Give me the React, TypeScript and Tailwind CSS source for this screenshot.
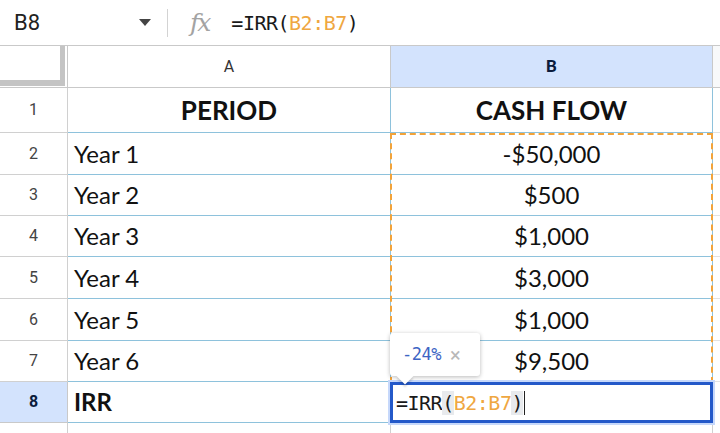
import React from 'react'

type Row = { n: number; a: string; b: string; h: string }

const rows: Row[] = [
  { n: 1, a: 'PERIOD', b: 'CASH FLOW', h: 'h-[45px]' },
  { n: 2, a: 'Year 1', b: '-$50,000', h: 'h-[42px]' },
  { n: 3, a: 'Year 2', b: '$500', h: 'h-[41px]' },
  { n: 4, a: 'Year 3', b: '$1,000', h: 'h-[41px]' },
  { n: 5, a: 'Year 4', b: '$3,000', h: 'h-[42px]' },
  { n: 6, a: 'Year 5', b: '$1,000', h: 'h-[42px]' },
  { n: 7, a: 'Year 6', b: '$9,500', h: 'h-[41px]' },
]

const mono = "font-['DejaVu_Sans_Mono','Liberation_Mono',monospace]"
const roboto = "font-['Roboto','Liberation_Sans',sans-serif]"

const Formula: React.FC<{ className?: string; parens?: boolean }> = ({ className, parens }) => (
  <span className={`${mono} ${className ?? ''} tracking-[-0.5px]`}>
    =IRR<span className={parens ? 'bg-[#e8eaed]' : ''}>(</span>
    <span className="text-[#efa741]">B2:B7</span>
    <span className={parens ? 'bg-[#e8eaed]' : ''}>)</span>
  </span>
)

export default function App() {
  return (
    <div className="w-[720px] h-[433px] bg-white overflow-hidden font-['Lato',sans-serif] text-[#111]">
      {/* name box + formula bar */}
      <div className="h-[46px] flex items-center border-b border-[#c9c9c9]">
        <div className={`ml-[14px] w-[120px] ${roboto} text-[22px] leading-none text-[#222]`}>B8</div>
        <svg width="12" height="7" viewBox="0 0 12 7" className="ml-[5px]">
          <path d="M0 0h12L6 7z" fill="#444" />
        </svg>
        <div className="ml-[16px] w-px h-[28px] bg-[#d3d3d3]" />
        <span className="ml-[22px] font-['DejaVu_Serif',serif] italic text-[25px] text-[#a3a3a3] tracking-[-2px]">fx</span>
        <Formula className="ml-[22px] text-[20px] text-[#1a1a1a]" />
      </div>

      <div className="relative">
        {/* column headers */}
        <div className={`grid grid-cols-[68px_323px_322px_7px] h-[42px] border-b border-[#c9c9c9] ${roboto}`}>
          <div className="border-r border-[#c9c9c9] flex">
            <div className="flex-1 mr-[2px] mb-[1px] border-r-[5px] border-b-[6px] border-[#c4c4c4]" />
          </div>
          <div className="border-r border-[#c9c9c9] flex items-center justify-center text-[16px] text-[#333]">A</div>
          <div className="border-r border-[#c9c9c9] bg-[#d3e3fd] flex items-center justify-center text-[17px] font-bold text-[#0b1c3c]">B</div>
          <div className="bg-[#f8f9fa]" />
        </div>

        {rows.map((r) => (
          <div key={r.n} className={`grid grid-cols-[68px_323px_322px_7px] ${r.h}`}>
            <div className={`border-r border-b border-[#d0d0d0] flex items-center justify-center ${roboto} text-[16px] text-[#444]`}>
              {r.n}
            </div>
            {r.n === 1 ? (
              <>
                <div className="border-r border-b border-[#8ec2dc] flex items-center justify-center text-[26px] font-bold">{r.a}</div>
                <div className="border-r border-b border-[#8ec2dc] flex items-center justify-center text-[26px] font-bold">{r.b}</div>
              </>
            ) : (
              <>
                <div className="border-r border-b border-[#8ec2dc] flex items-center pl-[6px] text-[24px]">{r.a}</div>
                <div className="border-r border-b border-[#8ec2dc] flex items-center justify-center text-[24px]">{r.b}</div>
              </>
            )}
            <div className="border-b border-[#e2e2e2]" />
          </div>
        ))}

        {/* active row */}
        <div className="grid grid-cols-[68px_323px_322px_7px] h-[41px]">
          <div className={`border-r border-b border-[#c9c9c9] bg-[#d3e3fd] flex items-center justify-center ${roboto} text-[16px] font-bold text-[#0b1c3c]`}>
            8
          </div>
          <div className="border-r border-b border-[#8ec2dc] flex items-center pl-[6px] text-[24px] font-bold">IRR</div>
          <div className="relative -ml-[1px] border-[3px] border-[#2459c9] shadow-[0_0_0_2px_#c6d8fb] flex items-center pl-[3px] z-10">
            <Formula className="text-[20px] text-[#1a1a1a]" parens />
            <span className="ml-[1px] w-px h-[24px] bg-[#222]" />
            {/* result preview */}
            <div className="absolute left-[-3px] bottom-[44px] w-[90px] h-[43px] bg-white rounded-[3px] shadow-[0_1px_4px_rgba(0,0,0,0.28)] flex items-center pl-[12px] gap-[9px]">
              <span className={`${mono} text-[17px] text-[#3d64c4] tracking-[-0.5px]`}>-24%</span>
              <span className={`text-[20px] text-[#b8b8b8] ${roboto}`}>×</span>
              <div className="absolute left-[9px] -bottom-[6px] w-[12px] h-[12px] bg-white rotate-45 shadow-[2px_2px_2px_rgba(0,0,0,0.15)]" />
            </div>
          </div>
          <div />
        </div>

        <div className="grid grid-cols-[68px_323px_322px_7px] h-[20px]">
          <div className="border-r border-[#d0d0d0]" />
          <div className="border-r border-[#d0d0d0]" />
          <div className="border-r border-[#d0d0d0]" />
          <div />
        </div>

        {/* copied range marker around B2:B7 */}
        <div className="absolute left-[390px] top-[87px] w-[323px] h-[250px] border-2 border-dashed border-[#f2a33a] pointer-events-none" />
      </div>
    </div>
  )
}
